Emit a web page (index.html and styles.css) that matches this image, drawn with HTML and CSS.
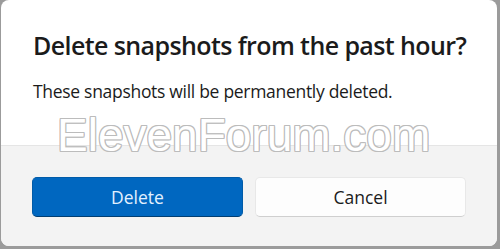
FILE: index.html
```html
<!DOCTYPE html>
<html lang="en">
<head>
    <meta charset="UTF-8">
    <title>Delete snapshots</title>
    <link rel="stylesheet" href="styles.css">
</head>
<body>
    <div class="dialog">
        <div class="dialog-content">
            <h1 class="dialog-title">Delete snapshots from the past hour?</h1>
            <p class="dialog-text">These snapshots will be permanently deleted.</p>
        </div>
        <div class="dialog-footer">
            <button class="button button-primary">Delete</button>
            <button class="button button-secondary">Cancel</button>
        </div>
        <div class="watermark">ElevenForum.com</div>
    </div>
</body>
</html>
```

FILE: styles.css
```css
/* Reset */
* {
    margin: 0;
    padding: 0;
    box-sizing: border-box;
}

:root {
    --accent: #0067c0;
    --accent-text: #e3f1ff;
    --text-color: #1b1b1b;
    --footer-bg: #f3f3f3;
    --divider: #e5e5e5;
    --mark-line: #bcbcbc;
}

body {
    width: 500px;
    height: 249px;
    overflow: hidden;
    background-color: #9b9b9b;
    font-family: "Open Sans", "Noto Sans", sans-serif;
}

/* Dialog */
.dialog {
    position: relative;
    height: 246px;
    margin: 0 3px 0 1px;
    background-color: #ffffff;
    border-radius: 8px;
    overflow: hidden;
    display: flex;
    flex-direction: column;
}

.dialog-content {
    height: 146px;
    padding: 28px 0 0 32px;
    border-bottom: 1px solid var(--divider);
}

.dialog-title {
    font-size: 25px;
    font-weight: 600;
    line-height: 35px;
    letter-spacing: -0.6px;
    white-space: nowrap;
    color: var(--text-color);
}

.dialog-text {
    margin-top: 16px;
    font-size: 17.5px;
    line-height: 24px;
    letter-spacing: -0.3px;
    color: var(--text-color);
}

/* Footer */
.dialog-footer {
    flex: 1;
    display: flex;
    gap: 12px;
    padding: 31px 31px 0 31px;
    background-color: var(--footer-bg);
}

.button {
    flex: 1;
    height: 40px;
    border-radius: 5px;
    font-family: inherit;
    font-size: 17.5px;
    cursor: pointer;
}

.button-primary {
    background-color: var(--accent);
    color: var(--accent-text);
    border: 1px solid #005ba8;
    border-bottom-color: #003e73;
}

.button-secondary {
    background-color: #fdfdfd;
    color: var(--text-color);
    border: 1px solid #e8e8e8;
    border-bottom-color: #cfcfcf;
}

/* Watermark over the dialog */
.watermark {
    position: absolute;
    left: 56px;
    top: 109px;
    font-family: "Liberation Sans", Arial, sans-serif;
    font-size: 46px;
    line-height: 52px;
    color: #ffffff;
    text-shadow:
        1px 0 var(--mark-line), -1px 0 var(--mark-line),
        0 1px var(--mark-line), 0 -1px var(--mark-line),
        1px 1px var(--mark-line), -1px -1px var(--mark-line),
        1px -1px var(--mark-line), -1px 1px var(--mark-line);
    pointer-events: none;
}
```
